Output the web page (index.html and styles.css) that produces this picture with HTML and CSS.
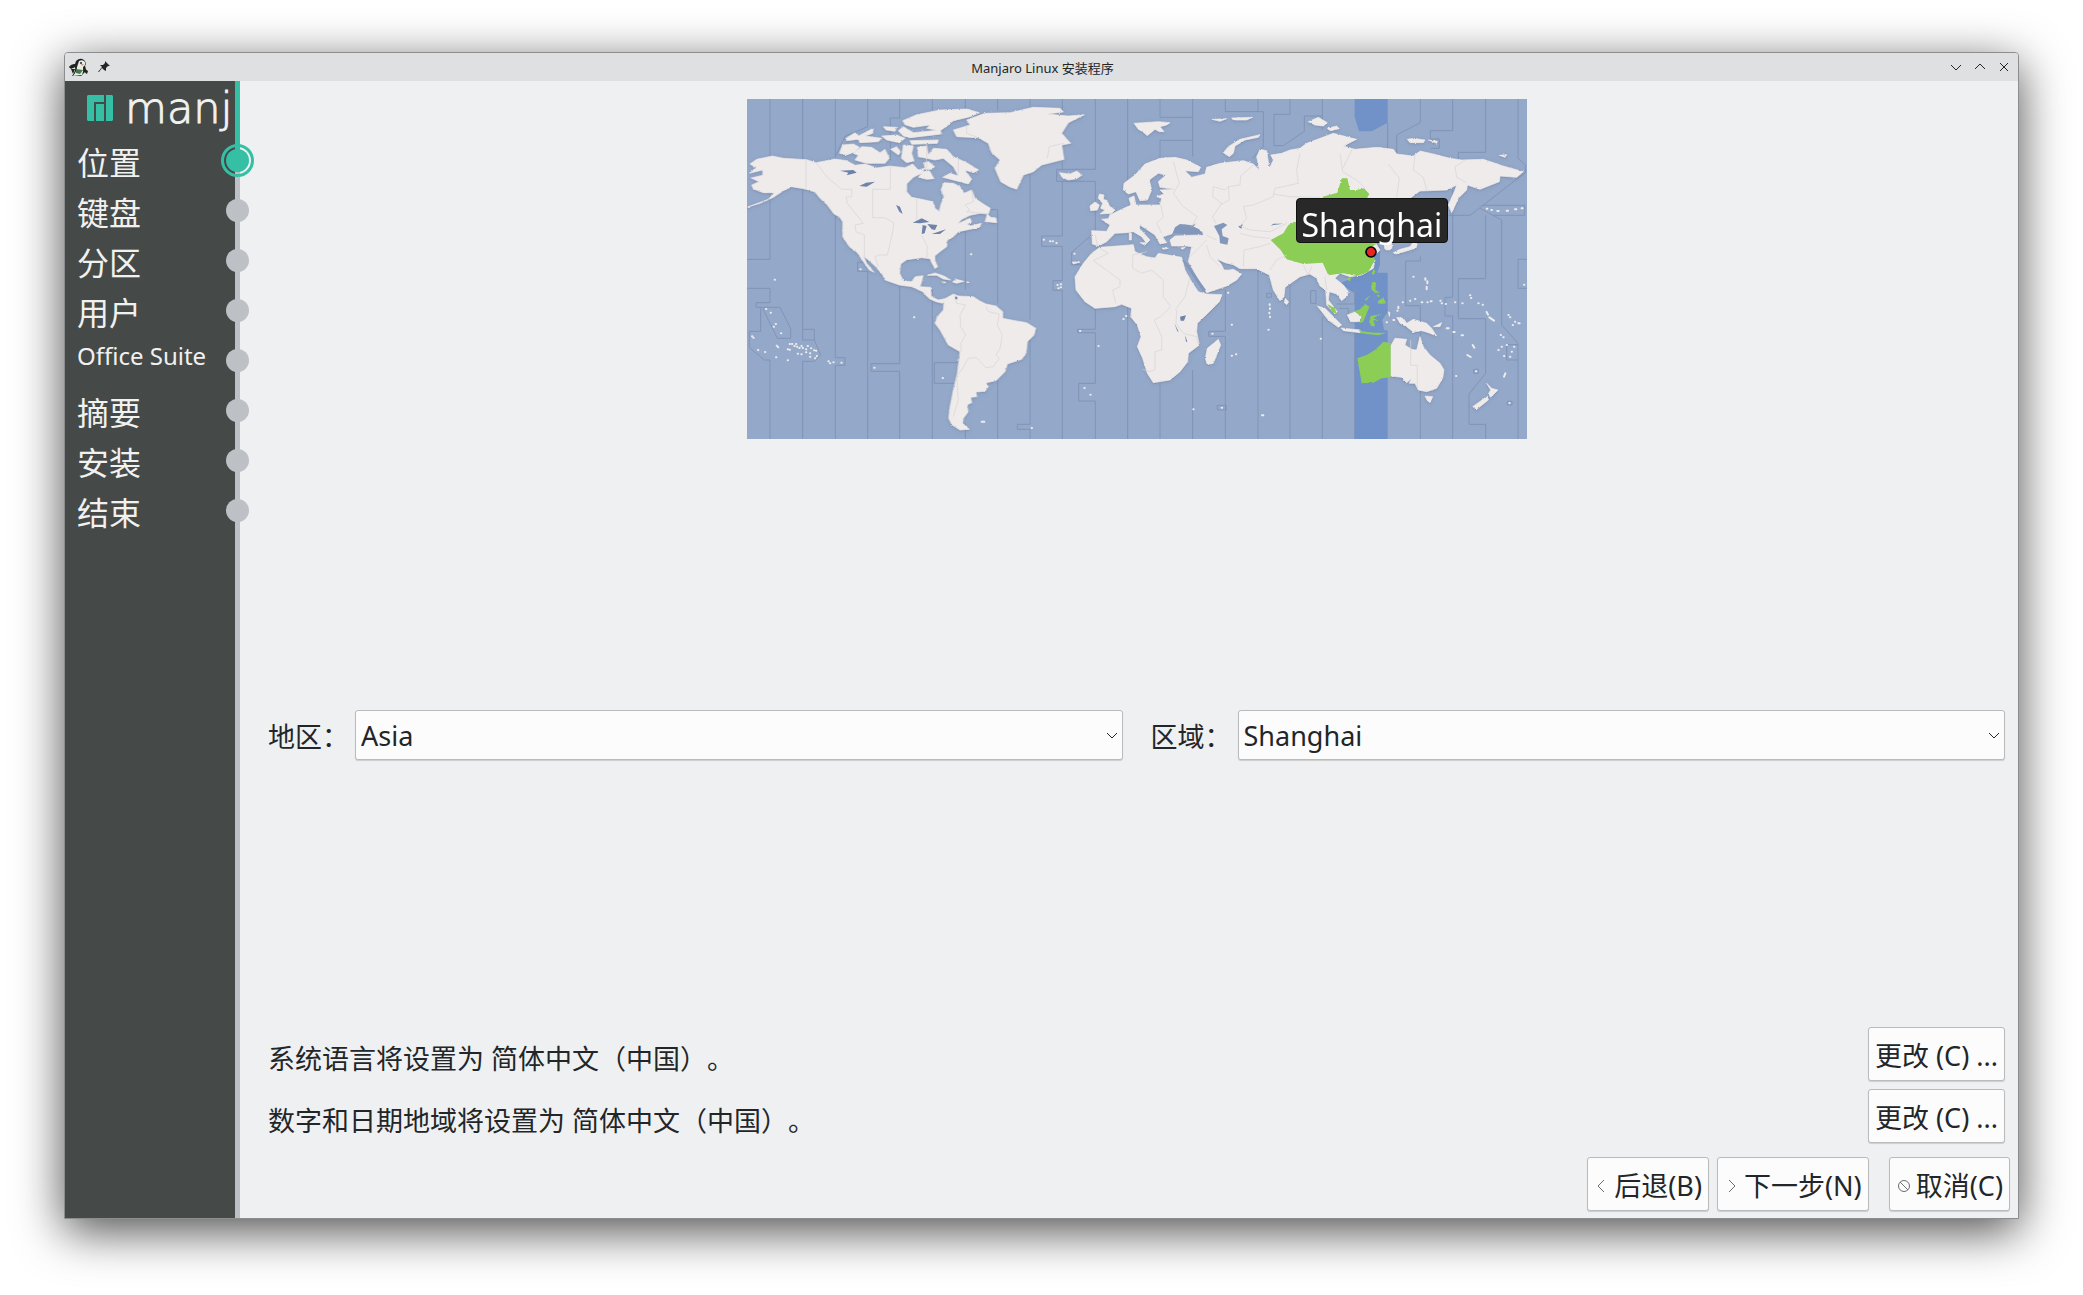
FILE: index.html
```html
<!DOCTYPE html>
<html lang="zh-CN">
<head>
    <meta charset="UTF-8">
    <meta name="viewport" content="width=device-width, initial-scale=1.0">
    <title>Manjaro Linux 安装程序</title>
    <link rel="stylesheet" href="styles.css">
</head>
<body>

<div class="window">

    <!-- Title bar -->
    <header class="titlebar">
        <div class="titlebar-side">
            <svg class="app-icon" viewBox="0 0 20 20" aria-hidden="true">
                <path d="M7 4 Q11 0 15 3 Q18 6 16 9 Q18 13 15 16 L12 19 L3 19 Q7 14 6 10 L3 11 L0 10 L6 7 Z" fill="#20241f"/>
                <path d="M10 4 Q14 2 16 5 Q17 8 14 10 Q15 14 13 18 L4 19 Q8 14 8 10 Z" fill="#e9e9e5"/>
                <path d="M0 10 Q2 7 6 7 L8 9 L2 12 Z M2 12 L6 12 L4 17 Z M15 11 L19 14 L18 17 L14 14 Z" fill="#20241f"/>
                <path d="M7 12 L14 13 L11 17 L7 16 Z" fill="#43784a"/>
                <circle cx="12" cy="6" r="1" fill="#20241f"/>
                <path d="M12 7 L15 7 L13 9 Z" fill="#c99a72"/>
            </svg>
            <svg class="pin-icon" viewBox="0 0 12 12" aria-hidden="true">
                <path d="M7 0 L12 5 L10 5 L8 7 L8 10 L6 9 L4 7 L1 11 L0 11 L4 6 L2 4 L5 4 L7 2 Z" fill="#232629"/>
            </svg>
        </div>
        <h1>Manjaro Linux 安装程序</h1>
        <div class="titlebar-side window-buttons">
            <button type="button" aria-label="最小化"><svg viewBox="0 0 12 12"><path d="M1 4 L6 9 L11 4"/></svg></button>
            <button type="button" aria-label="最大化"><svg viewBox="0 0 12 12"><path d="M1 8 L6 3 L11 8"/></svg></button>
            <button type="button" aria-label="关闭"><svg viewBox="0 0 12 12"><path d="M2 2 L10 10 M10 2 L2 10"/></svg></button>
        </div>
    </header>

    <div class="content">

        <!-- Install steps -->
        <aside class="sidebar">
            <div class="logo">
                <svg viewBox="0 0 26 26" aria-hidden="true">
                    <path d="M1 0 H17 V7 H7 V26 H1 L0 25 V1 Z M9 9 H17 V26 H9 Z M19 0 H25 L26 1 V25 L25 26 H19 Z" fill="#35bfa4"/>
                </svg>
                <span>manj</span>
            </div>
            <ol class="steps">
                <li class="active">位置</li>
                <li>键盘</li>
                <li>分区</li>
                <li>用户</li>
                <li class="latin">Office Suite</li>
                <li>摘要</li>
                <li>安装</li>
                <li>结束</li>
            </ol>
        </aside>

        <main>
            <div class="page">

                <!-- Time zone map -->
                <div class="map">
                    <svg viewBox="21 27 2340 1020" role="img" aria-label="Shanghai">
                        <defs>
                            <filter id="coast" x="-5%" y="-5%" width="110%" height="110%">
                                <feTurbulence type="fractalNoise" baseFrequency="0.16" numOctaves="2" seed="4" result="noise"/>
                                <feDisplacementMap in="SourceGraphic" in2="noise" scale="6" xChannelSelector="R" yChannelSelector="G"/>
                            </filter>
                        </defs>
                        <rect class="sea" x="21" y="27" width="2340" height="1020"/>

                        <!-- selected zone -->
                        <path class="zone" d="M1844 27 H1943 V98 L1895 124 H1857 L1844 80 Z M1844 1047 V610 L1800 580 L1870 550 L1900 450 L1920 470 V525 L1912 548 H1943 V665 L1927 690 L1932 720 L1943 722 V1047 Z"/>

                        <!-- zone borders at sea -->
                        <g class="lines">
                            <path d="M90 27 V508 H21 M21 595 H90 V638 H48 V652 H120 L152 716 V745 H112 L68 655 M62 655 V724 H28 V773 L74 810 H90 V1047"/>
                            <path d="M188 27 V718 H223 V750 H188 V718 M223 750 L242 795 L224 814 H188 V1047 M286 27 V803 H315 V826 H286 V1047"/>
                            <path d="M383 27 V110 L316 138 L286 200 M383 480 V517 H353 V544 H383 V1047 M479 27 V84 H451 V210 M479 585 V821 H393 V844 H479 V1047"/>
                            <path d="M577 27 V60 M577 600 V1047 M655 818 H583 V880 H645 M676 27 V60 M676 420 V600 M676 1000 V1047 M773 27 V60 M773 800 V1047 M750 359 H773 V640"/>
                            <path d="M870 27 V50 M870 250 V690 M870 740 V1003 H832 V1018 H870 V1047 M967 27 V60 M967 215 V238 M1066 27 V238 H950 V274 H1066 V425 L995 487 V524 H1025 M967 274 V438 H905 V469 H967 V572 H939 V601 H967 V1047"/>
                            <path d="M1066 655 V718 H1013 V728 H1066 V880 H1016 V933 H1066 V1047 M1163 27 V290 M1163 650 V1047 M1260 27 V82 H1358 M1260 210 V151 H1358 M1358 27 V200 M1260 880 V1047 M1358 840 V1047"/>
                            <path d="M1456 27 V65 H1570 V170 L1538 205 M1456 600 V724 H1406 V739 H1456 V1047 M1554 27 V65 M1554 540 V1047 M1650 27 V73 H1602 V167 H1630 L1693 124 V78 H1747 M1650 580 V1047 M1747 27 V120 M1747 680 V1047"/>
                            <path d="M1712 602 H1728 V640 H1712 Z M1580 610 H1594 V622 H1580 Z M1797 655 H1825 V690 M1844 595 V642 H1790 M1844 720 V1047 M1943 98 V250 M2041 27 V98 L1970 135 V190 M2138 27 V122 H2071 V147 H2098 V175 H2072"/>
                            <path d="M2041 500 V513 H1997 V647 H2041 V740 M2041 890 V1047 M2138 300 V622 H2115 V678 H2138 V1047 M2237 27 V187 H2155 V210 M2126 376 H2190 L2356 248 V225 L2334 205 V27 M2220 355 L2285 390 V705 L2334 760 V810 H2300 V764 H2334 M2225 346 H2354 V376 H2260"/>
                            <path d="M2237 376 V566 H2155 V686 H2237 V850 L2187 912 V1003 H2237 V1047 M2361 508 H2334 V595 H2361 M2334 810 V1047 M1432 946 H1459 V960 H1432 Z M2201 838 H2215 V850 H2201 Z M2302 934 H2316 V945 H2302 Z"/>
                        </g>

                        <g class="land">
                            <!-- North America -->
                            <path d="M30 222 L50 208 L97 198 L130 205 L200 209 L228 218 L285 207 L320 212 L345 226 L375 222 L410 234 L450 228 L495 233 L518 222 L535 240 L552 235 L548 248 L520 262 L500 282 L500 305 L515 322 L545 328 L578 335 L585 355 L598 365 L602 345 L612 320 L603 300 L610 278 L640 280 L660 290 L672 310 L695 300 L705 325 L730 342 L751 355 L745 372 L720 370 L690 376 L665 388 L652 402 L690 385 L695 396 L680 402 L692 408 L724 400 L718 412 L680 420 L655 425 L640 440 L622 450 L620 470 L600 485 L584 498 L585 512 L593 530 L585 536 L575 518 L570 506 L545 503 L500 509 L482 522 L479 550 L490 572 L515 575 L525 560 L549 557 L545 575 L540 590 L572 592 L574 620 L595 630 L614 626 L608 640 L588 635 L568 626 L548 605 L515 590 L478 585 L435 570 L428 555 L405 528 L385 510 L370 498 L380 520 L402 547 L388 540 L368 512 L352 488 L328 470 L308 440 L308 395 L298 380 L282 372 L262 345 L240 325 L225 306 L195 297 L155 290 L130 302 L100 322 L60 340 L23 351 L85 328 L102 308 L70 308 L40 297 L35 285 L57 275 L33 264 L68 256 L68 240 L28 250 L48 234 Z"/>
                            <!-- Arctic islands -->
                            <path d="M298 190 L308 165 L340 162 L358 172 L345 185 L320 195 Z M345 210 L355 196 L340 190 L365 170 L395 172 L420 188 L435 178 L448 205 L435 220 L380 220 Z M318 145 L345 128 L355 138 L400 115 L398 130 L375 138 L425 145 L415 155 L360 158 L355 148 L320 152 Z M430 110 L470 112 L465 124 L438 120 Z M425 138 L470 135 L495 145 L478 158 L440 150 Z M452 178 L470 170 L482 185 L475 195 Z M490 165 L520 168 L515 190 L522 212 L500 218 L484 205 Z M475 122 L490 110 L520 128 L600 120 L605 132 L510 143 L490 138 Z M510 152 L595 150 L592 160 L515 163 Z"/>
                            <path d="M488 92 L530 74 L600 60 L680 57 L718 68 L690 80 L640 92 L618 110 L600 122 L560 115 L570 105 L520 112 L495 104 Z"/>
                            <path d="M532 172 L560 168 L565 195 L580 175 L620 178 L640 200 L680 218 L716 240 L700 248 L675 240 L695 268 L685 282 L640 270 L608 262 L630 250 L655 258 L640 230 L610 205 L585 210 L560 205 L535 200 Z M535 262 L550 245 L568 242 L582 266 L560 268 Z M552 218 L566 215 L584 230 L575 238 L555 238 Z M735 395 L742 372 L752 382 L768 384 L770 398 L750 396 Z"/>
                            <!-- Greenland, Iceland -->
                            <path d="M640 120 L690 105 L680 90 L735 70 L810 68 L880 52 L960 55 L970 66 L920 72 L985 78 L1033 74 L985 98 L965 130 L992 160 L965 165 L972 208 L905 225 L880 245 L850 255 L830 298 L808 290 L782 275 L765 235 L780 210 L755 188 L745 160 L715 143 L650 140 Z M958 248 L990 252 L1010 243 L1026 255 L1010 266 L985 270 L966 262 Z"/>
                            <!-- Caribbean -->
                            <path d="M562 556 L585 549 L612 558 L632 570 L610 567 L590 556 Z M638 576 L648 568 L672 574 L650 580 Z M606 575 L618 577 L610 580 Z M680 575 L688 577 L682 579 Z"/>
                            <!-- South America -->
                            <path d="M612 628 L640 612 L655 618 L700 620 L718 632 L738 642 L768 648 L788 665 L788 685 L825 692 L860 698 L887 715 L882 735 L862 755 L858 790 L845 808 L802 822 L795 845 L768 872 L738 878 L745 890 L735 904 L708 906 L710 920 L692 922 L695 938 L680 945 L685 965 L670 985 L668 1000 L688 1018 L660 1020 L636 1005 L626 985 L630 950 L640 900 L652 850 L660 785 L625 765 L600 720 L585 700 L592 680 L610 660 Z"/>

                            <!-- Europe and Asia -->
                            <g transform="translate(960 0)">
                                <path d="M95 422 L140 424 L150 405 L125 388 L145 386 L150 375 L185 358 L213 345 L207 325 L222 318 L228 345 L300 345 L305 325 L290 320 L312 312 L300 300 L348 298 L300 292 L295 275 L318 255 L295 250 L268 270 L275 300 L262 330 L240 332 L228 305 L205 312 L190 300 L192 280 L225 255 L255 222 L300 205 L345 202 L380 210 L422 232 L415 245 L375 242 L395 262 L435 252 L440 232 L480 220 L520 215 L550 212 L580 222 L598 240 L590 200 L600 178 L620 182 L628 235 L640 210 L632 195 L665 190 L690 180 L720 175 L740 160 L820 130 L890 148 L850 168 L885 178 L950 172 L1000 178 L1010 192 L1060 198 L1080 183 L1120 192 L1170 205 L1205 210 L1270 208 L1330 228 L1390 245 L1370 262 L1320 258 L1318 275 L1260 298 L1222 285 L1220 300 L1195 325 L1175 368 L1165 345 L1185 300 L1190 285 L1160 300 L1080 303 L1050 325 L1040 370 L1000 430 L980 445 L995 470 L990 480 L975 478 L970 455 L945 455 L960 480 L930 510 L945 510 L940 535 L905 555 L870 560 L840 550 L825 565 L850 585 L865 605 L862 618 L845 632 L830 612 L808 605 L805 630 L832 665 L825 672 L800 645 L797 600 L780 588 L770 565 L750 552 L720 560 L675 592 L672 620 L660 632 L640 600 L628 555 L608 545 L590 536 L540 536 L520 524 L495 518 L470 506 L485 525 L492 540 L510 540 L520 538 L545 552 L530 570 L500 588 L440 608 L420 575 L385 515 L395 470 L380 468 L335 468 L330 450 L345 438 L400 436 L430 436 L428 425 L400 412 L410 400 L385 408 L375 402 L348 412 L335 432 L308 440 L320 458 L300 462 L285 435 L240 405 L238 415 L270 450 L260 460 L245 440 L220 425 L200 428 L165 430 L140 455 L115 468 L97 462 Z"/>
                                <!-- Britain, Ireland -->
                                <path d="M118 312 L132 315 L130 328 L142 332 L148 348 L165 360 L155 370 L120 372 L135 360 L122 355 L128 340 L115 325 Z M90 348 L105 336 L118 345 L112 360 L92 362 Z"/>
                                <!-- islands -->
                                <path d="M222 100 L250 98 L295 95 L330 98 L320 105 L300 110 L312 125 L298 125 L285 118 L262 137 L248 125 L235 118 Z M490 188 L505 170 L540 148 L600 134 L595 142 L555 150 L525 168 L520 190 L508 200 Z M455 88 L500 86 L480 94 Z M515 84 L578 82 L560 90 L520 90 Z M208 428 L214 430 L214 450 L208 450 Z M240 458 L260 458 L255 466 Z M306 474 L325 475 L310 478 Z M362 474 L376 472 L368 478 Z M676 625 L686 636 L680 644 L673 638 Z"/>
                                <!-- Africa -->
                                <path d="M120 472 L170 468 L220 464 L225 485 L260 500 L285 504 L295 490 L365 502 L375 540 L395 575 L415 605 L440 612 L486 614 L478 635 L445 668 L412 700 L410 725 L418 765 L385 790 L383 815 L360 845 L330 870 L280 878 L262 850 L248 805 L232 770 L243 740 L232 705 L212 680 L215 655 L185 643 L165 650 L105 655 L75 635 L48 600 L45 560 L70 520 L95 490 Z M475 748 L482 765 L460 820 L442 824 L436 805 L442 775 Z M92 514 L104 514 L102 522 Z M37 516 L60 516 L40 522 Z"/>
                            </g>

                            <!-- Far East and Oceania -->
                            <g transform="translate(1500 0)">
                                <path d="M205 95 L235 82 L262 98 L250 108 L225 105 Z M262 115 L290 108 L298 116 L270 122 Z M502 148 L520 145 L555 150 L550 158 L510 158 Z M565 150 L592 154 L590 160 Z M778 196 L800 194 L795 202 Z M437 460 L455 458 L456 475 L442 480 Z M460 488 L480 478 L510 470 L520 455 L532 462 L528 474 L490 486 L468 492 Z M530 420 L555 430 L540 440 Z"/>
                                <path d="M232 648 L255 655 L280 680 L305 705 L295 712 L265 690 Z M303 714 L360 720 L362 728 L310 722 Z M322 675 L345 665 L365 680 L355 695 L332 695 Z M445 665 L450 668 L448 680 Z M470 682 L490 685 L500 700 L520 688 L560 700 L575 715 L590 738 L565 728 L545 722 L520 726 L500 710 L480 700 Z M580 710 L605 698 L600 710 Z"/>
                                <path d="M452 768 L465 745 L500 748 L495 765 L515 778 L530 780 L540 740 L550 770 L570 795 L600 820 L612 840 L608 865 L590 895 L560 905 L535 900 L525 880 L508 880 L515 865 L500 878 L485 862 L452 858 Z M555 918 L578 920 L570 938 L562 932 Z M740 880 L755 895 L774 900 L752 922 L745 912 L752 900 Z M742 918 L745 930 L710 958 L698 950 L715 938 Z"/>
                            </g>
                        </g>

                        <!-- lakes -->
                        <path class="lake" d="M300 242 L340 240 L350 248 L320 256 L325 248 Z M358 288 L378 278 L405 275 L380 290 Z M468 345 L480 350 L488 372 L478 365 Z M518 398 L545 385 L568 396 L540 400 Z M545 432 L548 405 L560 408 L554 430 Z M562 402 L592 405 L585 420 L575 418 Z M575 432 L618 418 L600 432 Z M1495 410 L1508 402 L1504 416 Z M1592 408 L1600 401 L1630 401 L1600 405 Z M1320 680 L1338 676 L1332 692 L1322 692 Z M1303 700 L1316 725 L1312 724 Z M1335 735 L1342 755 L1338 755 Z M645 620 h7 v8 h-7 Z"/>
                        <!-- Black Sea, Caspian Sea, Red Sea -->
                        <path class="inner-sea" d="M1298 430 L1305 412 L1320 402 L1350 405 L1378 418 L1385 432 L1340 432 Z M1422 408 L1450 398 L1462 405 L1445 418 L1448 438 L1466 445 L1462 464 L1440 460 L1438 438 Z M1326 510 L1335 512 L1398 600 L1390 605 Z"/>

                        <!-- land in the selected zone -->
                        <g class="selected" filter="url(#coast)" transform="translate(1500 0)">
                            <path d="M92 450 L130 430 L145 405 L165 396 L260 380 L248 320 L292 308 L305 265 L322 265 L330 300 L350 300 L372 295 L388 312 L378 330 L400 400 L398 460 L412 460 L390 475 L405 510 L385 545 L350 558 L310 550 L265 556 L248 518 L190 522 L140 508 L122 480 Z"/>
                            <path d="M318 568 L334 560 L330 574 Z M395 550 L402 536 L406 545 L400 556 Z M262 642 L285 655 L290 672 L275 665 Z M330 668 L360 658 L375 642 L388 650 L370 695 L358 700 L365 680 L345 665 Z M388 690 L392 678 L425 672 L400 684 L418 694 L400 690 L405 708 L394 712 Z M396 576 L408 578 L406 600 L420 608 L405 608 L394 598 Z M410 612 L420 618 L414 622 Z M412 635 L430 622 L438 640 L420 642 Z M375 628 L392 616 L378 632 Z M358 722 L400 728 L440 728 L415 736 L362 730 Z"/>
                            <path d="M352 805 L380 795 L405 780 L430 755 L452 760 V862 L425 865 L400 878 L365 880 L360 850 Z"/>
                        </g>

                        <!-- zone borders on land -->
                        <g class="borders">
                            <path d="M198 210 V295 M228 218 L262 262 L305 298 H335 V320 L318 322 L322 340 L370 400 L345 405 L348 425 L373 435 V500 M451 228 V298 H398 V383 H435 L462 400 L455 440 L442 495 H418 L405 500 L415 530 M530 325 V390 M545 435 L562 470 L560 505 M695 300 L700 335 L675 345 L690 360 L680 365 L745 372 M560 160 V235 M655 205 V250"/>
                            <path d="M642 615 L650 640 L677 645 L660 675 L662 710 L677 735 L662 760 L664 785 M738 650 L745 665 L778 672 L772 705 L787 735 L780 775 L768 795 L778 805 L760 830 L738 833 L710 803 L685 805 L668 835 L650 860 L655 930 L640 980 M1066 435 L1072 465 M680 105 V130 L715 143 M970 160 L928 170 L922 205"/>
                            <path d="M1080 475 L1105 490 L1060 512 L1140 570 V590 L1118 600 L1127 640 M1220 485 L1178 495 V535 L1205 550 L1235 540 L1270 570 V620 L1292 650 L1262 680 L1243 690 L1265 740 V780 L1245 785 V840 L1230 845 L1208 838 M1350 560 L1335 620 L1305 660 M1310 660 L1308 700 L1330 730 L1370 740 L1375 765 M1262 345 L1270 380 L1250 400 L1265 430 M1300 215 L1318 280 L1300 310 L1330 350 L1372 380 L1355 410 M1400 436 L1430 450 M1345 505 L1400 450"/>
                            <path d="M1540 225 L1502 258 L1500 285 L1465 290 L1455 300 L1420 290 L1418 320 L1445 340 L1418 380 L1428 400 M1465 290 L1468 330 L1440 345 M1680 190 L1670 240 L1675 280 L1605 295 L1600 320 L1540 345 L1510 350 L1520 385 L1500 408 L1530 420 L1590 425 L1640 400 M1500 430 L1540 440 L1590 445 M1510 530 L1512 480 L1560 470 L1590 460 M1400 465 L1410 500 L1440 530 M1800 192 L1808 245 L1850 270 L1875 295 M1838 175 L1808 235 M1600 312 L1650 320 L1740 322 M1945 222 L1978 265 L1970 320 M2025 195 L2020 240 L2050 262 L2060 300 M2175 210 L2145 230 L2150 262 L2180 278 M1590 540 L1610 510 L1640 495 M1690 525 L1705 555 L1715 530 M1755 560 L1760 600 M2012 750 V826 H2032 V898"/>
                        </g>

                        <!-- small islands -->
                        <g class="dots">
                            <path d="M78 657h1M92 668h1M107 702h1M101 710h1M123 730h1M36 739h1M40 743h1M54 780h1M75 786h1M108 802h1M143 811h1M110 767h1M114 772h1M149 762h1M156 762h1M163 768h1M168 762h1M171 770h1M178 774h1M184 768h1M188 774h1M203 768h1M198 778h1M213 775h1M222 781h1M228 782h1M198 787h1M210 790h1M173 791h1M184 793h1M143 778h1M149 779h1M225 805h1M230 798h1M210 800h1M265 814h1M270 820h1M280 817h1M304 818h1M403 833h1M104 569h1M361 538h1M693 493h1M522 682h1M911 449h1M930 454h1M938 454h1M949 459h1M1003 491h1M952 585h1M962 583h1M962 592h1M955 595h1M1020 723h1M1075 768h1M1033 894h1M1051 914h1M1158 678h1M1150 687h1M725 995h8M875 1014h1M608 864h1"/>
                            <path d="M1464 608h1M1475 704h1M1417 731h1M1475 797h1M1488 793h1M1360 958h1M1445 953h1M1585 719h1M1589 643v2M1590 655v2M1588 668v2M1590 680v2M1566 976h4M1742 746h1M2020 560h1M2056 565v4M2062 574v6M2060 590v8M1988 637h1M2010 632h1M2025 627h1M2045 637h2M2062 637h1M2072 634h3M1975 650v5M1972 662h1M2101 632h1M2105 640h1M2117 642h1M2145 637h1M2167 640h1M2190 616h1M2193 624h1M2215 640h1M2228 644h1M2240 666l4 8M2248 682l14 10M2305 675h1M2310 682h1M2318 705h1M2325 695h1M2335 700h4M2282 735h1M2290 742h1M2275 780h1M2285 770h1M2292 798h1M2300 765h1M2322 770h1M2315 785h1M2310 800h1M2182 795l10 6M2198 765l5 8M2208 844h1M2308 939h1M2296 850l-4 10M2148 858h1M2120 715h6M2140 726h4M2165 736h4M2352 584h1M2240 356h2M2254 360h2M2272 363h4M2300 362h4M2325 358h4M2345 355h3M1940 697h1M1960 690h3"/>
                        </g>

                        <circle class="marker" cx="1893" cy="486" r="15"/>
                    </svg>
                    <span class="city">Shanghai</span>
                </div>

                <!-- Region and zone -->
                <form class="zone-form">
                    <label for="region">地区：</label>
                    <div class="select">
                        <select id="region">
                            <option>Asia</option>
                        </select>
                        <svg viewBox="0 0 12 12" aria-hidden="true"><path d="M1 4 L6 9 L11 4"/></svg>
                    </div>
                    <label class="second" for="zone">区域：</label>
                    <div class="select">
                        <select id="zone">
                            <option>Shanghai</option>
                        </select>
                        <svg viewBox="0 0 12 12" aria-hidden="true"><path d="M1 4 L6 9 L11 4"/></svg>
                    </div>
                </form>

                <!-- Locale -->
                <div class="locale">
                    <div class="locale-row">
                        <p>系统语言将设置为 简体中文（中国）。</p>
                        <button type="button" class="btn">更改 (C) ...</button>
                    </div>
                    <div class="locale-row">
                        <p>数字和日期地域将设置为 简体中文（中国）。</p>
                        <button type="button" class="btn">更改 (C) ...</button>
                    </div>
                </div>
            </div>

            <div class="nav">
                <button type="button" class="btn">
                    <svg viewBox="0 0 16 16" aria-hidden="true"><path d="M10 2 L4 8 L10 14"/></svg>后退(B)
                </button>
                <button type="button" class="btn">
                    <svg viewBox="0 0 16 16" aria-hidden="true"><path d="M5 2 L11 8 L5 14"/></svg>下一步(N)
                </button>
                <button type="button" class="btn cancel">
                    <svg viewBox="0 0 16 16" aria-hidden="true"><circle cx="8" cy="8" r="5.5"/><path d="M4 4 L12 12"/></svg>取消(C)
                </button>
            </div>
        </main>
    </div>
</div>

</body>
</html>
```

FILE: styles.css
```css
*, *::before, *::after {
    box-sizing: border-box;
}
body {
    margin: 0;
    padding: 52px 64px 76px;
    height: 100vh;
    background-color: #fff;
    font-family: "Noto Sans", "Noto Sans CJK SC", sans-serif;
    font-size: 27px;
    color: #232629;
    text-spacing-trim: space-all;
}
button, select {
    font: inherit;
    color: inherit;
}
.window {
    display: flex;
    flex-direction: column;
    height: 100%;
    border: 1px solid #8b8d8f;
    border-radius: 4px 4px 0 0;
    background-color: #eff0f1;
    box-shadow: 0 12px 48px rgba(0, 0, 0, 0.7);
}

/* Title bar */
.titlebar {
    display: flex;
    align-items: center;
    height: 28px;
    padding: 0 2px 0 4px;
    background-color: #dee0e2;
    border-radius: 3px 3px 0 0;
}
.titlebar h1 {
    margin: 0;
    padding-top: 2px;
    font-size: 13px;
    font-weight: normal;
    line-height: 20px;
}
.titlebar-side {
    flex: 1;
    display: flex;
    align-items: center;
    gap: 9px;
}
.app-icon {
    width: 20px;
    height: 20px;
}
.pin-icon {
    width: 12px;
    height: 12px;
}
.window-buttons {
    justify-content: flex-end;
    gap: 0;
}
.window-buttons button {
    display: flex;
    align-items: center;
    justify-content: center;
    width: 24px;
    height: 24px;
    padding: 0;
    border: none;
    background: none;
}
.window-buttons svg {
    width: 12px;
    height: 12px;
    fill: none;
    stroke: #232629;
}

.content {
    flex: 1;
    display: flex;
    min-height: 0;
}

/* Sidebar, with the progress rail on its right edge */
.sidebar {
    width: 175px;
    background: linear-gradient(to right, #454948 170px, #bdc0c5 170px);
    color: #f1f1ef;
}
.logo {
    position: relative;
    display: flex;
    align-items: center;
    gap: 12px;
    height: 55px;
    padding: 0 0 1px 22px;
}
.logo svg {
    flex: none;
    width: 26px;
    height: 26px;
}
.logo span {
    font-family: "DejaVu Sans", sans-serif;
    font-weight: 200;
    font-size: 43px;
    line-height: 48px;
    -webkit-text-stroke: 1px #f1f1ef;
}
.logo::after {
    content: "";
    position: absolute;
    top: 0;
    right: 0;
    width: 5px;
    height: 80px;
    background-color: #35bfa4;
}
.steps {
    list-style: none;
    margin: 0;
    padding: 0;
}
.steps li {
    position: relative;
    height: 50px;
    padding: 5px 0 0 12px;
    font-size: 32px;
    line-height: 44px;
}
.steps .latin {
    font-size: 24px;
    line-height: 30px;
}
.steps li::after {
    content: "";
    position: absolute;
    top: 13px;
    right: -9px;
    width: 23px;
    height: 23px;
    border-radius: 50%;
    background-color: #bdc0c5;
}
.steps .active::after {
    top: 8px;
    right: -14px;
    width: 33px;
    height: 33px;
    padding: 2px;
    border: 3px solid #35bfa4;
    background-color: #35bfa4;
    background-clip: content-box;
}

/* Main area */
main {
    flex: 1;
    display: flex;
    flex-direction: column;
    min-width: 0;
}
.page {
    flex: 1;
    display: flex;
    flex-direction: column;
    justify-content: space-between;
    padding: 18px 13px 14px 28px;
}

/* Map */
.map {
    position: relative;
    align-self: center;
    width: 780px;
}
.map svg {
    display: block;
    width: 100%;
}
.sea {
    fill: #94a8c9;
}
.zone {
    fill: #7092c8;
}
.lines {
    fill: none;
    stroke: #8094b6;
    stroke-width: 3;
}
.land {
    fill: #efebeb;
    stroke: #efebeb;
    stroke-width: 2;
    filter: url(#coast) drop-shadow(0 1px 1px rgba(40, 55, 90, 0.8)) drop-shadow(0 2px 4px rgba(40, 60, 100, 0.5));
}
.lake {
    fill: #6d83a8;
}
.inner-sea {
    fill: #8297ba;
}
.borders {
    fill: none;
    stroke: #d6d3d4;
    stroke-width: 2;
}
.selected {
    fill: #8ccd57;
}
.dots {
    fill: none;
    stroke: #efebeb;
    stroke-width: 6;
    stroke-linecap: round;
}
.marker {
    fill: #e82424;
    stroke: #000;
    stroke-width: 5;
}
.city {
    position: absolute;
    left: 549px;
    top: 99px;
    height: 45px;
    padding: 6px 5px 0;
    border: 1px solid #111;
    border-radius: 4px;
    background-color: #282828;
    color: #fff;
    font-size: 32px;
    line-height: 40px;
}

/* Region and zone */
.zone-form {
    display: flex;
    align-items: center;
    margin-top: 4px;
}
.zone-form label {
    margin-right: 6px;
    padding-top: 4px;
    line-height: 40px;
}
.zone-form .second {
    margin-left: 28px;
}
.select {
    position: relative;
    flex: 1;
}
.select select {
    display: block;
    width: 100%;
    height: 50px;
    padding: 0 32px 0 5px;
    border: 1px solid #b9bbbd;
    border-radius: 3px;
    background-color: #fcfcfc;
    box-shadow: 0 1px 1px rgba(0, 0, 0, 0.15);
    appearance: none;
}
.select svg {
    position: absolute;
    right: 5px;
    top: 19px;
    width: 12px;
    height: 12px;
    fill: none;
    stroke: #232629;
    pointer-events: none;
}

/* Buttons */
.btn {
    display: flex;
    align-items: center;
    gap: 4px;
    height: 54px;
    padding: 3px 6px 0;
    border: 1px solid #b9bbbd;
    border-radius: 3px;
    background-color: #fcfcfc;
    box-shadow: 0 1px 1px rgba(0, 0, 0, 0.15);
    line-height: 40px;
    white-space: nowrap;
}
.btn svg {
    width: 16px;
    height: 16px;
    fill: none;
    stroke: #6b6e70;
}
.locale {
    display: flex;
    flex-direction: column;
    gap: 8px;
}
.locale-row {
    display: flex;
    align-items: center;
    justify-content: space-between;
}
.locale-row p {
    margin: 0;
    padding-top: 10px;
    line-height: 40px;
}
.nav {
    display: flex;
    justify-content: flex-end;
    gap: 8px;
    padding: 0 8px 7px;
}
.nav .cancel {
    margin-left: 12px;
}
```
